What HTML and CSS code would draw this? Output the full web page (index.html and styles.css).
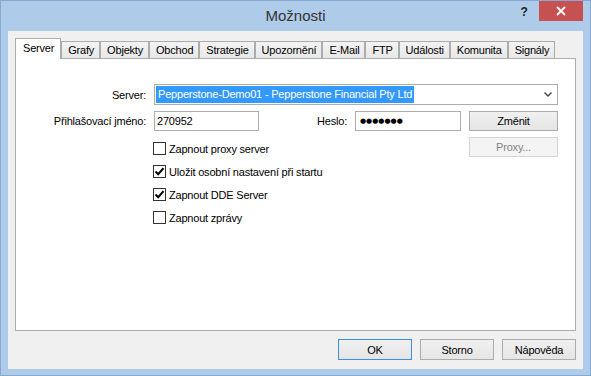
FILE: index.html
```html
<!DOCTYPE html>
<html lang="cs">
<head>
  <meta charset="UTF-8" />
  <title>Možnosti</title>
  <link rel="stylesheet" href="styles.css">
</head>
<body>

  <div class="window">
    <div class="titlebar">
      <span></span>
      <div class="title">Možnosti</div>
      <div class="caption-btns">
        <span class="help">?</span>
        <span class="close">
          <svg width="10" height="10" viewBox="0 0 10 10">
            <path d="M1 1 L9 9 M9 1 L1 9" stroke="#fff" stroke-width="1.8" fill="none" />
          </svg>
        </span>
      </div>
    </div>

    <div class="client">
      <div class="tabs">
        <div class="tab active">Server</div>
        <div class="tab">Grafy</div>
        <div class="tab">Objekty</div>
        <div class="tab">Obchod</div>
        <div class="tab">Strategie</div>
        <div class="tab">Upozornění</div>
        <div class="tab">E-Mail</div>
        <div class="tab">FTP</div>
        <div class="tab">Události</div>
        <div class="tab">Komunita</div>
        <div class="tab">Signály</div>
      </div>

      <div class="panel">
        <div class="form">
          <!-- server row -->
          <label class="lbl">Server:</label>
          <div class="combo">
            <span class="sel">Pepperstone-Demo01 - Pepperstone Financial Pty Ltd</span>
            <svg class="arrow" width="8" height="5" viewBox="0 0 8 5">
              <path d="M0.5 0.5 L4 4 L7.5 0.5" stroke="#444" stroke-width="1.4" fill="none" />
            </svg>
          </div>

          <!-- login row -->
          <label class="lbl">Přihlašovací jméno:</label>
          <div class="textbox">270952</div>
          <label class="lbl">Heslo:</label>
          <div class="textbox pass">●●●●●●●</div>
          <button class="btn">Změnit</button>

          <!-- options -->
          <div class="checks">
            <div class="check"><span class="box"></span>Zapnout proxy server</div>
            <div class="check"><span class="box on"><svg width="11" height="11" viewBox="0 0 11 11"><path d="M1.5 5.5 L4.2 8.2 L9.5 2.2" stroke="#000" stroke-width="2" fill="none" /></svg></span>Uložit osobní nastavení při startu</div>
            <div class="check"><span class="box on"><svg width="11" height="11" viewBox="0 0 11 11"><path d="M1.5 5.5 L4.2 8.2 L9.5 2.2" stroke="#000" stroke-width="2" fill="none" /></svg></span>Zapnout DDE Server</div>
            <div class="check"><span class="box"></span>Zapnout zprávy</div>
          </div>
          <button class="btn proxy" disabled>Proxy...</button>
        </div>
      </div>

      <div class="footer">
        <button class="btn default">OK</button>
        <button class="btn">Storno</button>
        <button class="btn">Nápověda</button>
      </div>
    </div>
  </div>

</body>
</html>
```

FILE: styles.css
```css
:root {
  --frame: #aecbe9;
  --frame-edge: #86a9d2;
  --face: #f0f0f0;
  --line: #acacac;
  --text: #000;
}
* {
  box-sizing: border-box;
}
body {
  margin: 0;
  font-family: 'Liberation Sans', Arial, sans-serif;
  font-size: 11px;
  letter-spacing: -0.2px;
  color: var(--text);
}
.window {
  width: 591px;
  height: 376px;
  border: 1px solid var(--frame-edge);
  background-color: var(--frame);
  display: flex;
  flex-direction: column;
  padding: 0 7px 6px 7px;
}

/* title bar */
.titlebar {
  height: 30px;
  display: grid;
  grid-template-columns: 1fr auto 1fr;
  align-items: start;
}
.title {
  font-size: 15px;
  letter-spacing: 0;
  line-height: 30px;
  color: #333;
}
.caption-btns {
  justify-self: end;
  display: flex;
}
.help {
  width: 26px;
  height: 20px;
  font-weight: bold;
  font-size: 12px;
  line-height: 22px;
  text-align: center;
  color: #222;
  margin-right: 2px;
}
.close {
  width: 44px;
  height: 20px;
  background-color: #c75050;
  display: flex;
  align-items: center;
  justify-content: center;
}

/* client area */
.client {
  flex: 1;
  background-color: var(--face);
  display: flex;
  flex-direction: column;
  padding: 7px 7px 0 7px;
}
.tabs {
  display: flex;
  align-items: flex-end;
  height: 21px;
  margin-bottom: -1px;
  position: relative;
  z-index: 1;
}
.tab {
  height: 17px;
  line-height: 16px;
  margin-bottom: 1px;
  padding: 0 5px 0 6px;
  border: 1px solid var(--line);
  border-bottom: none;
  background: linear-gradient(#f3f3f3, #e8e8e8);
}
.tab.active {
  height: 21px;
  line-height: 19px;
  margin-bottom: 0;
  padding: 0 6px 0 7px;
  background: #fff;
}
.panel {
  flex: 1;
  background-color: #fff;
  border: 1px solid var(--line);
}
.form {
  display: grid;
  grid-template-columns: 130px 105px 1fr 106px 89px;
  grid-template-rows: 21px 20px auto;
  column-gap: 8px;
  row-gap: 6px;
  padding: 25px 17px 0 0;
}
.lbl {
  text-align: right;
  align-self: center;
}
.combo {
  grid-column: 2 / -1;
  border: 1px solid var(--line);
  display: flex;
  align-items: center;
  justify-content: space-between;
  padding: 0 5px 0 1px;
}
.sel {
  background-color: #3399ff;
  color: #fff;
  padding: 0 2px;
  line-height: 17px;
}
.textbox {
  border: 1px solid #abadb3;
  line-height: 18px;
  padding-left: 2px;
}
.textbox.pass {
  font-family: 'DejaVu Sans', sans-serif;
  font-size: 7px;
  letter-spacing: 0;
  padding-left: 4px;
}
.btn {
  font: inherit;
  letter-spacing: inherit;
  color: var(--text);
  border: 1px solid var(--line);
  background: linear-gradient(#f0f0f0, #e5e5e5);
  padding: 0;
  height: 20px;
}
.btn.proxy {
  grid-column: 5;
  align-self: start;
  color: #838383;
  background: #f4f4f4;
  border-color: #d5d5d5;
}
.btn.default {
  border-color: #3c8fe0;
}
.checks {
  grid-column: 2 / 5;
  display: flex;
  flex-direction: column;
}
.check {
  height: 23px;
  display: flex;
  align-items: center;
  gap: 3px;
  margin-left: -1px;
}
.box {
  width: 13px;
  height: 13px;
  border: 1px solid #333;
  background-color: #fff;
  display: flex;
  align-items: center;
  justify-content: center;
}

/* bottom buttons */
.footer {
  display: flex;
  justify-content: flex-end;
  gap: 8px;
  padding: 8px 0 9px 0;
}
.footer .btn {
  width: 74px;
  height: 21px;
}
```
